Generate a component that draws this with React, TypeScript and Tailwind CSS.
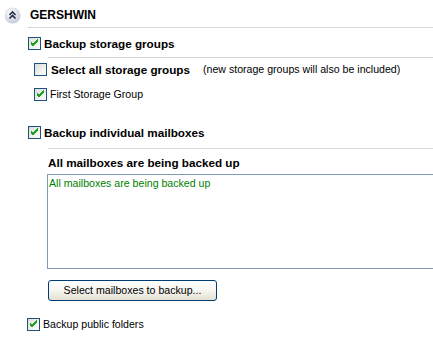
import React from "react";

// XP-style checkbox
function CheckBox({ checked }: { checked: boolean }) {
  return (
    <div className="relative w-[13px] h-[13px] shrink-0 border border-[#1c5180] bg-gradient-to-br from-[#dcdcd7] to-white">
      {checked && (
        <svg className="absolute left-0 top-0" width="11" height="11" viewBox="0 0 11 11">
          <path d="M2 5 L4 7 L9 2 M2 6 L4 8 L9 3 M2 4 L4 6 L9 1" stroke="#21a121" strokeWidth="1" fill="none" />
        </svg>
      )}
    </div>
  );
}

function Row({ checked, label, bold, className }: { checked: boolean; label: string; bold?: boolean; className: string }) {
  return (
    <div className={`flex items-center h-[13px] ${className}`}>
      <CheckBox checked={checked} />
      <span className={`ml-[3px] whitespace-nowrap ${bold ? "font-bold text-[11.7px]" : "text-[10.6px]"}`}>{label}</span>
    </div>
  );
}

export default function App() {
  return (
    <div className="w-[433px] h-[340px] bg-white overflow-hidden text-black font-['Liberation_Sans',Arial,sans-serif]">
      {/* header */}
      <div className="flex items-center h-[27px] pl-[4px] pt-[3px]">
        <svg width="17" height="17" viewBox="0 0 17 17">
          <defs>
            <radialGradient id="g" cx="0.4" cy="0.35" r="0.7">
              <stop offset="0" stopColor="#ffffff" />
              <stop offset="1" stopColor="#c3c8d8" />
            </radialGradient>
          </defs>
          <circle cx="8.5" cy="8.5" r="8" fill="url(#g)" />
          <path d="M5.5 8 L8.5 5 L11.5 8 M5.5 11.5 L8.5 8.5 L11.5 11.5" stroke="#1f2a44" strokeWidth="1.6" fill="none" />
        </svg>
        <span className="ml-[9px] font-bold text-[12px]">GERSHWIN</span>
      </div>
      <div className="ml-[28px] h-px bg-[#d6d6d6]" />

      <Row checked bold label="Backup storage groups" className="ml-[28px] mt-[9px]" />
      <div className="ml-[48px] mt-[7px] h-px bg-[#d6d6d6]" />

      <div className="flex items-center ml-[34px] mt-[5px] h-[13px]">
        <CheckBox checked={false} />
        <span className="ml-[4px] font-bold text-[11.7px] whitespace-nowrap">Select all storage groups</span>
        <span className="ml-[13px] text-[10.6px] whitespace-nowrap">(new storage groups will also be included)</span>
      </div>
      <Row checked label="First Storage Group" className="ml-[34px] mt-[12px]" />

      <Row checked bold label="Backup individual mailboxes" className="ml-[28px] mt-[25px]" />
      <div className="ml-[48px] mt-[9px] h-px bg-[#d6d6d6]" />

      <div className="ml-[48px] h-[25px] pt-[2px] flex items-center font-bold text-[11.7px]">All mailboxes are being backed up</div>
      <div className="ml-[47px] w-[400px] h-[95px] border border-[#7f9db9] px-[1px] pt-[1px] text-[10.6px] text-[#008000]">
        All mailboxes are being backed up
      </div>

      <button className="block ml-[48px] mt-[11px] w-[169px] h-[21px] rounded-[3px] border border-[#003c74] bg-gradient-to-b from-white via-[#f6f5f0] to-[#e3e0d3] text-[10.6px]">
        Select mailboxes to backup...
      </button>

      <Row checked label="Backup public folders" className="ml-[27px] mt-[17px]" />
    </div>
  );
}
